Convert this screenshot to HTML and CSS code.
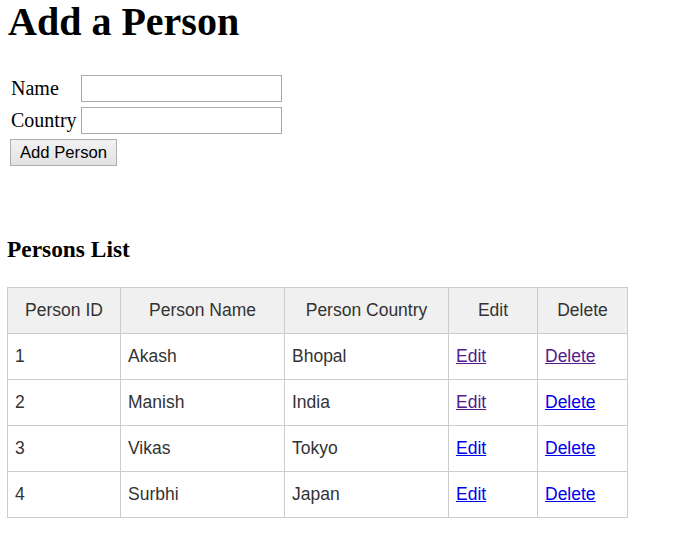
FILE: index.html
```html
<!DOCTYPE html>
<html>
<head>
<meta charset="utf-8">
<title>Add a Person</title>
<link rel="stylesheet" href="styles.css">
</head>
<body>
<div class="page">
  <h1 class="title">Add a Person</h1>
  <form class="person-form">
    <label class="lbl" for="name">Name</label>
    <input class="field" id="name" type="text">
    <label class="lbl" for="country">Country</label>
    <input class="field" id="country" type="text">
    <button class="btn" type="button">Add Person</button>
  </form>
  <h3 class="subtitle">Persons List</h3>
  <table class="tg">
    <colgroup>
      <col class="c-id"><col class="c-name"><col class="c-country"><col class="c-edit"><col class="c-del">
    </colgroup>
    <thead>
      <tr><th>Person ID</th><th>Person Name</th><th>Person Country</th><th>Edit</th><th>Delete</th></tr>
    </thead>
    <tbody>
      <tr><td>1</td><td>Akash</td><td>Bhopal</td><td><a class="link visited" href="#">Edit</a></td><td><a class="link visited" href="#">Delete</a></td></tr>
      <tr><td>2</td><td>Manish</td><td>India</td><td><a class="link visited" href="#">Edit</a></td><td><a class="link" href="#">Delete</a></td></tr>
      <tr><td>3</td><td>Vikas</td><td>Tokyo</td><td><a class="link" href="#">Edit</a></td><td><a class="link" href="#">Delete</a></td></tr>
      <tr><td>4</td><td>Surbhi</td><td>Japan</td><td><a class="link" href="#">Edit</a></td><td><a class="link" href="#">Delete</a></td></tr>
    </tbody>
  </table>
</div>
</body>
</html>
```

FILE: styles.css
```css
html, body {
  margin: 0;
  padding: 0;
  background: #ffffff;
}
.page {
  padding: 0 0 0 7px;
  font-family: "Liberation Serif", "Times New Roman", serif;
  color: #000;
}
.title {
  margin: 0 0 0 1px;
  font-size: 40px;
  line-height: 44px;
  font-weight: bold;
}
.person-form {
  margin: 31px 0 0 3px;
  display: grid;
  grid-template-columns: 71px 201px;
  grid-auto-rows: 27px;
  row-gap: 5px;
  width: max-content;
}
.lbl {
  font-size: 20px;
  line-height: 27px;
  padding-left: 1px;
}
.field {
  box-sizing: border-box;
  width: 201px;
  height: 27px;
  margin: 0;
  border: 1px solid #a9a9a9;
  padding: 1px 3px;
  font-size: 16px;
  background: #fff;
}
.btn {
  grid-column: 1 / -1;
  justify-self: start;
  box-sizing: border-box;
  width: 107px;
  height: 27px;
  margin: 0;
  padding: 0;
  border: 1px solid #adadad;
  background: linear-gradient(#f2f2f2, #e2e2e2);
  font-family: "Liberation Sans", Arial, sans-serif;
  font-size: 16.67px;
  color: #000;
}
.subtitle {
  margin: 70px 0 0 0;
  font-size: 23.4px;
  line-height: 27px;
  font-weight: bold;
}
.tg {
  margin-top: 24px;
  border-collapse: collapse;
  border-spacing: 0;
  table-layout: fixed;
  width: 621px;
  font-family: "Liberation Sans", Arial, sans-serif;
  font-size: 17.5px;
  line-height: 21px;
}
.c-id { width: 113px; }
.c-name { width: 164px; }
.c-country { width: 164px; }
.c-edit { width: 89px; }
.c-del { width: 90px; }
.tg th, .tg td {
  border: 1px solid #ccc;
  padding: 12px 7px;
  color: #333;
  overflow: hidden;
  white-space: nowrap;
}
.tg th {
  font-weight: normal;
  background: #f0f0f0;
  text-align: center;
}
.tg td {
  background: #fff;
  text-align: left;
}
.link {
  color: #0000ee;
  text-decoration: underline;
}
.link.visited {
  color: #551a8b;
}
```
